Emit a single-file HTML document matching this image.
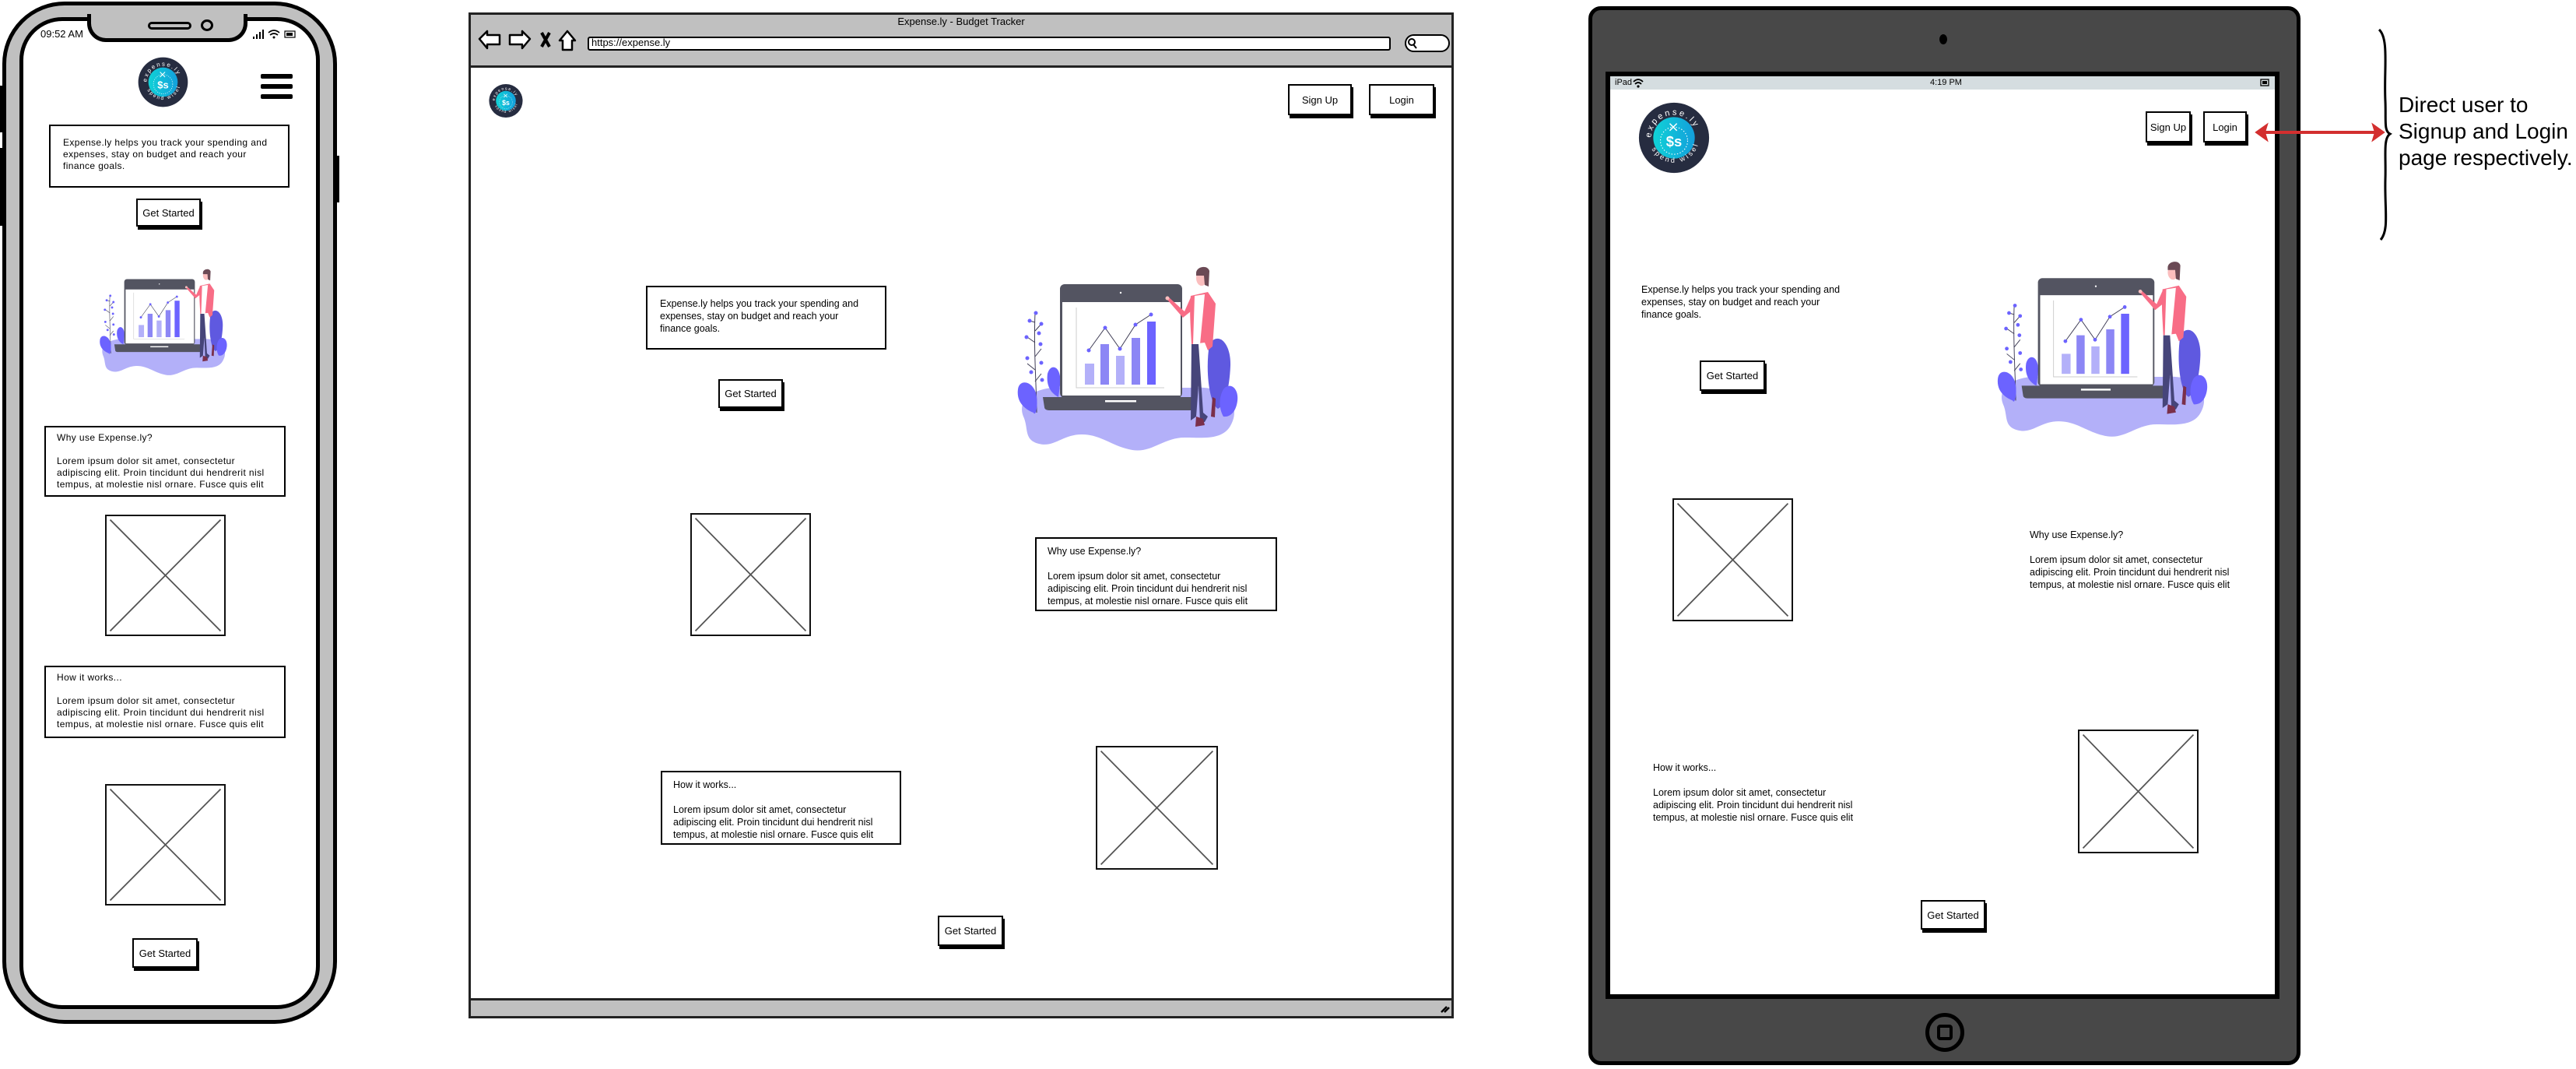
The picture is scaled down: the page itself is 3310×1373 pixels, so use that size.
<!DOCTYPE html>
<html><head><meta charset="utf-8">
<style>
*{margin:0;padding:0;box-sizing:border-box}
body{width:3310px;height:1373px;background:#fff;position:relative;overflow:hidden;font-family:"Liberation Sans",sans-serif;color:#000}
.a{position:absolute}
.btn{position:absolute;border:2px solid #000;background:#fff;box-shadow:2px 4px 0 #000;font-size:13px;display:flex;align-items:center;justify-content:center;white-space:nowrap}
.box{position:absolute;border:2px solid #000;background:#fff;font-size:12.5px;line-height:16px;padding:10px 14px;white-space:nowrap;overflow:hidden}
.ph{position:absolute;border:2.5px solid #111;background:#fff}
.ph svg{position:absolute;left:0;top:0;width:100%;height:100%}
.txt{position:absolute;font-size:12.5px;line-height:16px;white-space:nowrap}
.pw{letter-spacing:0.4px}
</style></head><body>
<svg width="0" height="0" style="position:absolute">
<defs>
<linearGradient id="cg" x1="0" x2="1"><stop offset="0" stop-color="#10d2d6"/><stop offset="1" stop-color="#139fdc"/></linearGradient>
<symbol id="ill" viewBox="0 0 320 250">
<path d="M25,205 C15,180 45,165 80,168 L245,168 C285,165 305,190 292,215 C282,236 255,232 232,232 C205,232 190,252 165,248 C140,244 125,228 100,228 C75,228 65,245 45,240 C25,235 32,220 25,205Z" fill="#b3b0f9"/>
<path d="M42,200 C42,170 38,120 40,72" stroke="#3f3d56" stroke-width="1" fill="none"/>
<path d="M40,95 L48,86 M40,110 L30,103 M40,128 L48,118 M40,145 L30,137 M40,160 L48,150 M40,84 L33,82" stroke="#3f3d56" stroke-width="1"/>
<g fill="#6c63ff"><circle cx="41" cy="72" r="2.5"/><circle cx="33" cy="82" r="2.5"/><circle cx="48" cy="86" r="2.5"/><circle cx="45" cy="98" r="2.5"/><circle cx="29" cy="103" r="2.5"/><circle cx="47" cy="112" r="2.5"/><circle cx="30" cy="130" r="2.5"/><circle cx="48" cy="136" r="2.5"/><circle cx="35" cy="148" r="2.5"/><circle cx="49" cy="158" r="2.5"/></g>
<path d="M18,170 C20,155 40,160 42,180 C44,195 40,205 38,200 C25,195 16,185 18,170Z" fill="#6c63ff"/>
<path d="M56,150 C60,135 75,140 72,165 L70,180 C60,175 54,165 56,150Z" fill="#6c63ff"/>
<path d="M264,112 C275,95 292,110 291,140 C290,165 285,190 275,195 C265,190 258,150 264,112Z" fill="#5f59e0"/>
<path d="M282,170 C290,160 302,168 300,185 C298,200 290,206 282,205 C276,195 276,180 282,170Z" fill="#6c63ff"/>
<rect x="72" y="35" width="157" height="146" rx="6" fill="#535461"/>
<rect x="75" y="58" width="152" height="120" fill="#fff"/>
<circle cx="150" cy="46" r="1.2" fill="#fff"/>
<path d="M50,180 L248,180 L246,193 C246,196 243,197 240,197 L58,197 C54,197 52,195 52,193Z" fill="#535461"/>
<rect x="130" y="184" width="40" height="2.5" fill="#fff"/>
<path d="M93,65 L93,168 L206,168" stroke="#ccc" stroke-width="1" fill="none"/>
<rect x="104" y="137" width="12" height="27" fill="#b3b0f9"/>
<rect x="124" y="112" width="11" height="52" fill="#8c86f5"/>
<rect x="144" y="127" width="11" height="37" fill="#b3b0f9"/>
<rect x="164" y="104" width="11" height="60" fill="#8c86f5"/>
<rect x="184" y="83" width="11" height="81" fill="#6c63ff"/>
<path d="M109,120 L130,91 L149,118 L169,87 L189,74" stroke="#3f3d56" stroke-width="1" fill="none"/>
<g fill="#6c63ff"><circle cx="109" cy="120" r="2.5"/><circle cx="130" cy="91" r="2.5"/><circle cx="149" cy="118" r="2.5"/><circle cx="169" cy="87" r="2.5"/><circle cx="189" cy="74" r="2.5"/></g>
<path d="M241,112 L250,112 L256,200 L262,205 L258,212 L252,212 L250,165 L247,205 L240,210 Z" fill="#46457a"/>
<path d="M247,205 L256,208 L258,216 L246,218 Z" fill="#7a2f4a"/>
<path d="M268,180 L272,182 L271,206 L266,205 Z" fill="#7a2f4a"/>
<path d="M240,50 L262,45 L272,60 L268,115 L262,120 L258,110 L241,112 C240,90 238,70 240,50Z" fill="#f86d86"/>
<path d="M245,50 L258,48 L252,112 L243,112 Z" fill="#fff"/>
<path d="M240,52 L232,70 L212,52 L210,55 L230,78 L240,70Z" fill="#f86d86"/>
<circle cx="210" cy="53" r="2.5" fill="#fbbebe"/>
<ellipse cx="254" cy="27" rx="7" ry="10" fill="#fbbebe"/>
<path d="M247,20 C248,12 262,10 264,18 L263,38 L258,36 L257,24 L247,24Z" fill="#6b4a55"/>
</symbol>
<symbol id="logo" viewBox="0 0 100 100">
<circle cx="50" cy="50" r="49" fill="#262c40"/>
<circle cx="50" cy="50" r="29" fill="url(#cg)"/>
<circle cx="50" cy="54" r="19" fill="none" stroke="#fff" stroke-width="1.2" stroke-dasharray="1.5 2.5"/>
<text x="50" y="62" text-anchor="middle" font-size="20" font-weight="bold" fill="#fff" font-family="Liberation Sans">$s</text>
<path d="M44,30 L54,40 M54,30 L44,40" stroke="#fff" stroke-width="1.6"/>
<path id="arcT" d="M18,50 A32,32 0 0 1 82,50" fill="none"/>
<path id="arcB" d="M16,58 A35,35 0 0 0 84,58" fill="none"/>
<text font-size="12" fill="#fff" letter-spacing="3" font-family="Liberation Sans"><textPath href="#arcT">expense.ly</textPath></text>
<text font-size="10" fill="#fff" letter-spacing="3" font-family="Liberation Sans"><textPath href="#arcB" startOffset="8">spend wisely</textPath></text>
</symbol>
<symbol id="xbox" viewBox="0 0 100 100" preserveAspectRatio="none">
<path d="M3,3 L97,97 M97,3 L3,97" stroke="#555" stroke-width="1.8" vector-effect="non-scaling-stroke"/>
</symbol>
</defs></svg>

<!-- PHONE -->
<div class="a" style="left:3px;top:2px;width:430px;height:1313px;background:#c0c0c0;border:5px solid #000;border-radius:80px"></div>
<div class="a" style="left:25px;top:22px;width:386px;height:1274px;background:#fff;border:5px solid #000;border-radius:55px"></div>
<div class="a" style="left:112px;top:18px;width:206px;height:36px;background:#c0c0c0;border:5px solid #000;border-top:none;border-radius:0 0 24px 24px"></div>
<div class="a" style="left:190px;top:28px;width:56px;height:10px;border:3px solid #000;border-radius:6px"></div>
<div class="a" style="left:258px;top:25px;width:16px;height:15px;border:3px solid #000;border-radius:50%"></div>
<div class="a" style="left:0;top:110px;width:6px;height:60px;background:#000"></div>
<div class="a" style="left:0;top:190px;width:6px;height:100px;background:#000"></div>
<div class="a" style="left:430px;top:200px;width:6px;height:60px;background:#000"></div>
<div class="txt" style="left:52px;top:36px;font-size:13px">09:52 AM</div>
<svg class="a" style="left:325px;top:36px" width="60" height="16"><rect x="0" y="11" width="2" height="3"/><rect x="4" y="8" width="2" height="6"/><rect x="8" y="5" width="2" height="9"/><rect x="12" y="2" width="2" height="12"/><path d="M20,6 Q27,0 34,6 M22,9 Q27,5 32,9" stroke="#000" stroke-width="1.6" fill="none"/><circle cx="27" cy="12" r="1.5"/><rect x="41" y="4" width="13" height="8" fill="none" stroke="#000" stroke-width="1.2"/><rect x="43" y="6" width="8" height="4"/></svg>
<svg class="a" style="left:177px;top:73px" width="65" height="65"><use href="#logo"/></svg>
<div class="a" style="left:335px;top:95px;width:41px;height:6px;background:#000;border-radius:2px"></div>
<div class="a" style="left:335px;top:108px;width:41px;height:6px;background:#000;border-radius:2px"></div>
<div class="a" style="left:335px;top:121px;width:41px;height:6px;background:#000;border-radius:2px"></div>
<div class="box pw" style="left:63px;top:160px;width:309px;height:81px;padding:14px 16px;line-height:15px;font-size:12px">Expense.ly helps you track your spending and<br>expenses, stay on budget and reach your<br>finance goals.</div>
<div class="btn" style="left:175px;top:255px;width:83px;height:36px">Get Started</div>
<svg class="a" style="left:118px;top:333px" width="185" height="155"><use href="#ill"/></svg>
<div class="box pw" style="left:57px;top:547px;width:310px;height:91px;padding:6px 14px;line-height:15px;font-size:12px">Why use Expense.ly?<br><br>Lorem ipsum dolor sit amet, consectetur<br>adipiscing elit. Proin tincidunt dui hendrerit nisl<br>tempus, at molestie nisl ornare. Fusce quis elit</div>
<div class="ph" style="left:135px;top:661px;width:155px;height:156px"><svg><use href="#xbox"/></svg></div>
<div class="box pw" style="left:57px;top:855px;width:310px;height:93px;padding:6px 14px;line-height:15px;font-size:12px">How it works...<br><br>Lorem ipsum dolor sit amet, consectetur<br>adipiscing elit. Proin tincidunt dui hendrerit nisl<br>tempus, at molestie nisl ornare. Fusce quis elit</div>
<div class="ph" style="left:135px;top:1007px;width:155px;height:156px"><svg><use href="#xbox"/></svg></div>
<div class="btn" style="left:170px;top:1205px;width:84px;height:38px">Get Started</div>

<!-- BROWSER -->
<div class="a" style="left:602px;top:16px;width:1266px;height:1292px;border:3px solid #222;background:#fff"></div>
<div class="a" style="left:602px;top:16px;width:1266px;height:71px;background:#c0c0c0;border:3px solid #222"></div>
<div class="a" style="left:602px;top:1282px;width:1266px;height:26px;background:#c0c0c0;border:3px solid #222"></div>
<div class="txt" style="left:0;width:2470px;text-align:center;top:20px;font-size:13px">Expense.ly - Budget Tracker</div>
<svg class="a" style="left:612px;top:36px" width="135" height="32" fill="#fff" stroke="#000" stroke-width="2.5" stroke-linejoin="round">
<path d="M4,14 L14,4 L14,9 L30,9 L30,21 L14,21 L14,26 Z"/>
<path d="M69,14 L59,4 L59,9 L43,9 L43,21 L59,21 L59,26 Z"/>
<path d="M84,6 L94,24 M94,6 L84,24" stroke-width="4"/>
<path d="M107,16 L117,4 L127,16 L123,16 L123,28 L111,28 L111,16 Z"/>
</svg>
<div class="a" style="left:755px;top:47px;width:1032px;height:18px;background:#fff;border:2.5px solid #000;border-radius:3px"></div>
<div class="txt" style="left:760px;top:47px;font-size:13px">https://expense.ly</div>
<div class="a" style="left:1805px;top:44px;width:58px;height:23px;background:#fff;border:2.5px solid #000;border-radius:12px"></div>
<svg class="a" style="left:1808px;top:48px" width="14" height="16"><circle cx="6" cy="6" r="4" fill="none" stroke="#000" stroke-width="2"/><path d="M8,9 L12,14" stroke="#000" stroke-width="2"/></svg>
<svg class="a" style="left:1850px;top:1288px" width="14" height="14"><path d="M2,12 L9,5 M6,12 L12,6" stroke="#000" stroke-width="2.5"/></svg>
<svg class="a" style="left:628px;top:107px" width="44" height="45"><use href="#logo"/></svg>
<div class="btn" style="left:1655px;top:108px;width:82px;height:40px">Sign Up</div>
<div class="btn" style="left:1759px;top:108px;width:84px;height:40px">Login</div>
<div class="box" style="left:830px;top:367px;width:309px;height:82px;padding:13px 16px">Expense.ly helps you track your spending and<br>expenses, stay on budget and reach your<br>finance goals.</div>
<div class="btn" style="left:923px;top:487px;width:83px;height:37px">Get Started</div>
<svg class="a" style="left:1290px;top:330px" width="320" height="250"><use href="#ill"/></svg>
<div class="ph" style="left:887px;top:659px;width:155px;height:158px"><svg><use href="#xbox"/></svg></div>
<div class="box" style="left:1330px;top:690px;width:311px;height:95px;padding:8px 14px">Why use Expense.ly?<br><br>Lorem ipsum dolor sit amet, consectetur<br>adipiscing elit. Proin tincidunt dui hendrerit nisl<br>tempus, at molestie nisl ornare. Fusce quis elit</div>
<div class="ph" style="left:1408px;top:958px;width:157px;height:159px"><svg><use href="#xbox"/></svg></div>
<div class="box" style="left:849px;top:990px;width:309px;height:95px;padding:8px 14px">How it works...<br><br>Lorem ipsum dolor sit amet, consectetur<br>adipiscing elit. Proin tincidunt dui hendrerit nisl<br>tempus, at molestie nisl ornare. Fusce quis elit</div>
<div class="btn" style="left:1205px;top:1176px;width:84px;height:39px">Get Started</div>

<!-- TABLET -->
<div class="a" style="left:2041px;top:8px;width:915px;height:1360px;background:#484848;border:5px solid #000;border-radius:16px"></div>
<div class="a" style="left:2492px;top:44px;width:10px;height:13px;background:#000;border-radius:50%"></div>
<div class="a" style="left:2063px;top:92px;width:866px;height:1191px;background:#fff;border:6px solid #000"></div>
<div class="a" style="left:2069px;top:98px;width:854px;height:17px;background:#d5dde0"></div>
<div class="txt" style="left:2075px;top:99px;font-size:11px;line-height:14px">iPad</div>
<svg class="a" style="left:2098px;top:100px" width="14" height="13"><path d="M1,5 Q7,-1 13,5 M3,8 Q7,4 11,8" stroke="#000" stroke-width="1.8" fill="none"/><circle cx="7" cy="11" r="1.6"/></svg>
<div class="txt" style="left:2480px;top:99px;font-size:11px;line-height:14px">4:19 PM</div>
<svg class="a" style="left:2904px;top:101px" width="14" height="11"><rect x="1" y="1" width="10" height="8" fill="none" stroke="#000" stroke-width="1.3"/><rect x="3" y="3" width="6" height="4"/></svg>
<svg class="a" style="left:2105px;top:131px" width="92" height="92"><use href="#logo"/></svg>
<div class="btn" style="left:2757px;top:143px;width:58px;height:40px">Sign Up</div>
<div class="btn" style="left:2831px;top:143px;width:56px;height:40px">Login</div>
<div class="txt" style="left:2109px;top:364px">Expense.ly helps you track your spending and<br>expenses, stay on budget and reach your<br>finance goals.</div>
<div class="btn" style="left:2184px;top:463px;width:84px;height:39px">Get Started</div>
<svg class="a" style="left:2550px;top:318px" width="305" height="250"><use href="#ill"/></svg>
<div class="ph" style="left:2149px;top:640px;width:155px;height:158px"><svg><use href="#xbox"/></svg></div>
<div class="txt" style="left:2608px;top:679px">Why use Expense.ly?<br><br>Lorem ipsum dolor sit amet, consectetur<br>adipiscing elit. Proin tincidunt dui hendrerit nisl<br>tempus, at molestie nisl ornare. Fusce quis elit</div>
<div class="ph" style="left:2670px;top:937px;width:155px;height:159px"><svg><use href="#xbox"/></svg></div>
<div class="txt" style="left:2124px;top:978px">How it works...<br><br>Lorem ipsum dolor sit amet, consectetur<br>adipiscing elit. Proin tincidunt dui hendrerit nisl<br>tempus, at molestie nisl ornare. Fusce quis elit</div>
<div class="btn" style="left:2468px;top:1156px;width:83px;height:38px">Get Started</div>
<div class="a" style="left:2474px;top:1301px;width:50px;height:50px;border:5px solid #000;border-radius:50%"></div>
<div class="a" style="left:2489px;top:1316px;width:20px;height:20px;border:4px solid #000;border-radius:4px"></div>

<!-- ANNOTATION -->
<svg class="a" style="left:2895px;top:30px" width="180" height="290">
<path d="M8,140 L163,140" stroke="#d32f2f" stroke-width="4"/>
<path d="M4,140 L18,130 L15,140 L18,150 Z M168,140 L154,130 L157,140 L154,150 Z" fill="#d32f2f" stroke="#d32f2f" stroke-width="2"/>
<path d="M162,8 C175,20 168,60 170,100 C171,125 168,138 176,142 C167,148 171,170 170,200 C169,240 175,265 164,278" stroke="#000" stroke-width="3" fill="none"/>
</svg>
<div class="txt" style="left:3082px;top:118px;font-size:28px;line-height:34px">Direct user to<br>Signup and Login<br>page respectively.</div>
</body></html>
